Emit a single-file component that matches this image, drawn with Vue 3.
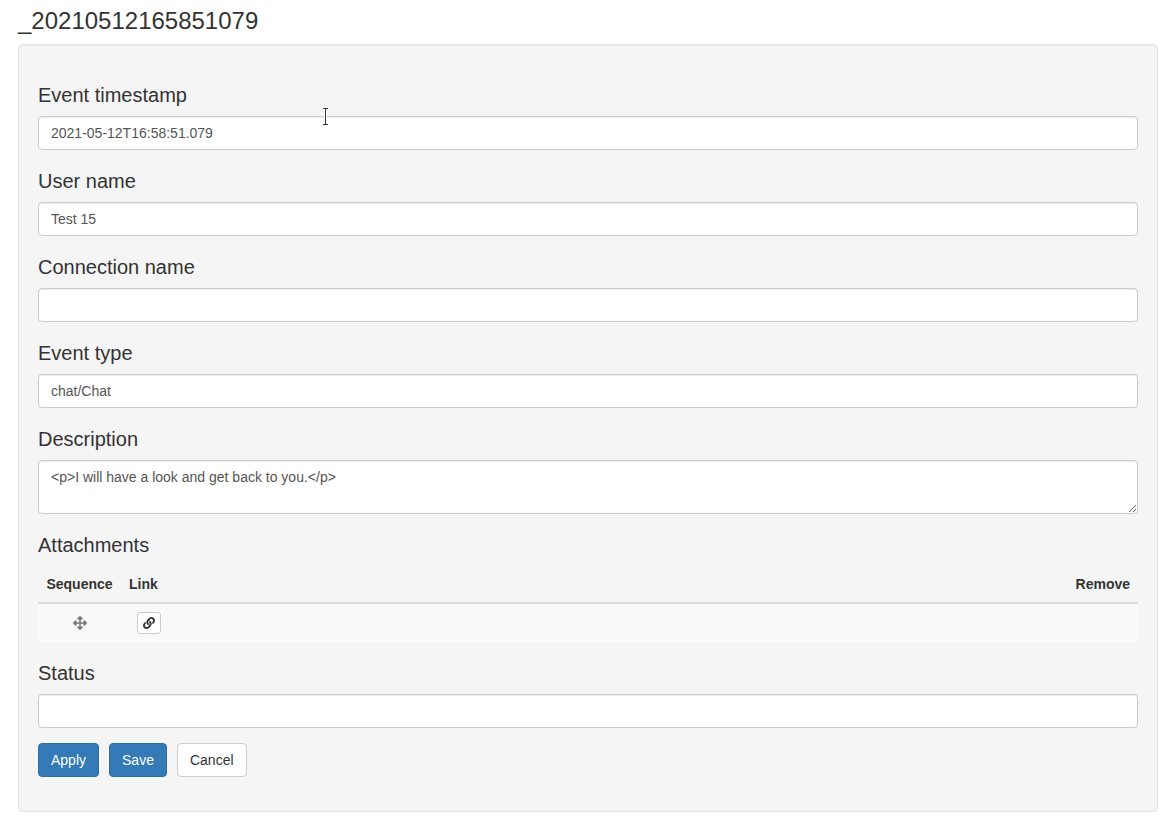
<script setup>
import { ref } from 'vue'

const title = '_20210512165851079'
const fields = ref([
  { id: 'timestamp', label: 'Event timestamp', value: '2021-05-12T16:58:51.079' },
  { id: 'user', label: 'User name', value: 'Test 15' },
  { id: 'connection', label: 'Connection name', value: '' },
  { id: 'type', label: 'Event type', value: 'chat/Chat' }
])
const description = ref('<p>I will have a look and get back to you.</p>')
const status = ref('')
</script>

<template>
  <main class="page">
    <h1 class="title">{{ title }}</h1>
    <form class="well" @submit.prevent>
      <div v-for="field in fields" :key="field.id" class="group">
        <label class="label" :for="field.id">{{ field.label }}</label>
        <input :id="field.id" v-model="field.value" class="control" type="text" />
        <svg v-if="field.id === 'timestamp'" class="pointer" viewBox="0 0 9 19" aria-hidden="true">
          <path class="halo" d="M2 1.5h2.5v16H2M7 1.5H4.500M4.500 17.500H7" />
          <path class="beam" d="M2 1.500h5M4.500 1.500v16M2 17.500h5" />
        </svg>
      </div>

      <div class="group">
        <label class="label" for="description">Description</label>
        <textarea id="description" v-model="description" class="control area" rows="2"></textarea>
      </div>

      <div class="group">
        <h2 id="attachments" class="label">Attachments</h2>
        <table class="table" aria-labelledby="attachments">
          <thead>
            <tr>
              <th class="sequence" scope="col">Sequence</th>
              <th scope="col">Link</th>
              <th class="remove" scope="col">Remove</th>
            </tr>
          </thead>
          <tbody>
            <tr>
              <td class="sequence">
                <svg class="move" viewBox="0 0 512 512" aria-hidden="true">
                  <path d="M352.201 425.775l-79.196 79.196c-9.373 9.373-24.568 9.373-33.941 0l-79.196-79.196c-15.119-15.119-4.411-40.971 16.971-40.970H228V284H127.196v51.162c0 21.382-25.851 32.090-40.971 16.971L7.029 272.937c-9.373-9.373-9.373-24.569 0-33.941L86.225 159.800c15.119-15.119 40.971-4.411 40.971 16.971V228H228V127.196h-51.230c-21.382 0-32.090-25.851-16.971-40.971l79.196-79.196c9.373-9.373 24.568-9.373 33.941 0l79.196 79.196c15.119 15.119 4.411 40.971-16.971 40.971H284V228h100.804v-51.162c0-21.382 25.851-32.090 40.970-16.971l79.196 79.196c9.373 9.373 9.373 24.569 0 33.941L425.773 352.200c-15.119 15.119-40.971 4.411-40.970-16.971V284H284v100.804h51.230c21.382 0 32.090 25.851 16.971 40.971z" />
                </svg>
              </td>
              <td>
                <button class="link-button" type="button" aria-label="Open link">
                  <svg viewBox="0 0 512 512" aria-hidden="true">
                    <path d="M326.612 185.391c59.747 59.809 58.927 155.698.36 214.59-.11.12-.24.25-.36.37l-67.2 67.2c-59.27 59.27-155.699 59.262-214.96 0-59.27-59.26-59.27-155.7 0-214.96l37.106-37.106c9.84-9.84 26.786-3.3 27.294 10.606.648 17.722 3.826 35.527 9.69 52.721 1.986 5.822.567 12.262-3.783 16.612l-13.087 13.087c-28.026 28.026-28.905 73.66-1.155 101.96 28.024 28.579 74.086 28.749 102.325.51l67.2-67.19c28.191-28.191 28.073-73.757 0-101.83-3.701-3.694-7.429-6.564-10.341-8.569a16.037 16.037 0 0 1-6.947-12.606c-.396-10.567 3.348-21.456 11.698-29.806l21.054-21.055c5.521-5.521 14.182-6.199 20.584-1.731a152.482 152.482 0 0 1 20.522 17.197zM467.547 44.449c-59.261-59.262-155.69-59.27-214.96 0l-67.2 67.2c-.12.12-.25.25-.36.37-58.566 58.892-59.387 154.781.36 214.59a152.454 152.454 0 0 0 20.521 17.196c6.402 4.468 15.064 3.789 20.584-1.731l21.054-21.055c8.35-8.35 12.094-19.239 11.698-29.806a16.037 16.037 0 0 0-6.947-12.606c-2.912-2.005-6.64-4.875-10.341-8.569-28.073-28.073-28.191-73.639 0-101.83l67.2-67.19c28.239-28.239 74.3-28.069 102.325.51 27.75 28.3 26.872 73.934-1.155 101.96l-13.087 13.087c-4.35 4.35-5.769 10.79-3.783 16.612 5.864 17.194 9.042 34.999 9.69 52.721.509 13.906 17.454 20.446 27.294 10.606l37.106-37.106c59.271-59.259 59.271-155.699.001-214.959z" />
                  </svg>
                </button>
              </td>
              <td></td>
            </tr>
          </tbody>
        </table>
      </div>

      <div class="group">
        <label class="label" for="status">Status</label>
        <input id="status" v-model="status" class="control" type="text" />
      </div>

      <div class="actions">
        <button class="btn primary" type="submit">Apply</button>
        <button class="btn primary" type="button">Save</button>
        <button class="btn" type="button">Cancel</button>
      </div>
    </form>
  </main>
</template>

<style>
body {
  margin: 0;
  background: #fff;
}
</style>

<style scoped>
.page,
.page * {
  box-sizing: border-box;
}

.page {
  padding: 8px 13px 14px 18px;
  color: #333;
  font-family: "Liberation Sans", Arial, sans-serif;
  font-size: 14px;
  line-height: 20px;
}

.title {
  margin: 0 0 10px;
  font-size: 24px;
  font-weight: 400;
  line-height: 26px;
}

.well {
  display: flex;
  flex-direction: column;
  gap: 20px;
  padding: 39px 19px 34px;
  background: #f5f5f5;
  border: 1px solid #e3e3e3;
  border-radius: 4px;
  box-shadow: inset 0 1px 1px rgba(0, 0, 0, 0.05);
}

.group {
  position: relative;
}

.label {
  display: block;
  margin: 0 0 10px;
  font-size: 20px;
  font-weight: 400;
  line-height: 22px;
}

.control {
  display: block;
  width: 100%;
  height: 34px;
  margin: 0;
  padding: 6px 12px;
  color: #555;
  font: inherit;
  background: #fff;
  border: 1px solid #ccc;
  border-radius: 4px;
  box-shadow: inset 0 1px 1px rgba(0, 0, 0, 0.075);
}

.area {
  height: 54px;
  resize: vertical;
}

.pointer {
  position: absolute;
  top: 23px;
  left: 283px;
  width: 9px;
  height: 19px;
  fill: none;
  overflow: visible;
}

.halo {
  stroke: #fff;
  stroke-width: 3;
}

.beam {
  stroke: #333;
  stroke-width: 1;
}

.table {
  width: 100%;
  border-collapse: separate;
  border-spacing: 0;
}

.table th,
.table td {
  padding: 8px;
  text-align: left;
  vertical-align: middle;
}

.table th {
  font-weight: 700;
  border-bottom: 2px solid #ddd;
}

.table td {
  background: #f9f9f9;
}

.table .sequence {
  width: 83px;
  text-align: center;
}

.table .remove {
  text-align: right;
}

.move {
  display: block;
  width: 14px;
  height: 14px;
  margin: 0 auto;
  fill: #777;
}

.link-button {
  display: flex;
  align-items: center;
  justify-content: center;
  width: 24px;
  height: 22px;
  margin: 0 0 0 8px;
  padding: 0;
  background: #fff;
  border: 1px solid #ccc;
  border-radius: 3px;
}

.link-button svg {
  width: 12px;
  height: 12px;
  fill: #333;
}

.actions {
  display: flex;
  gap: 10px;
  margin-top: -5px;
}

.btn {
  height: 34px;
  margin: 0;
  padding: 6px 12px;
  color: #333;
  font: inherit;
  background: #fff;
  border: 1px solid #ccc;
  border-radius: 4px;
}

.btn.primary {
  color: #fff;
  background: #337ab7;
  border-color: #2e6da4;
}
</style>
